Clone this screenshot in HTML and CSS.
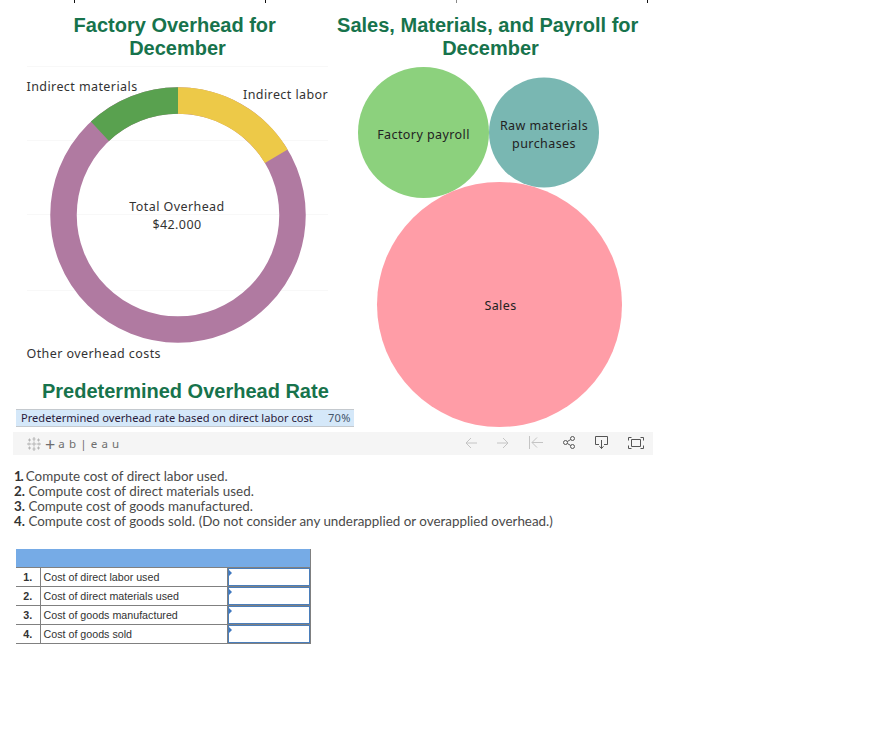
FILE: index.html
```html
<!DOCTYPE html>
<html>
<head>
  <meta charset="utf-8">
  <title>Factory Overhead for December</title>
  <link rel="stylesheet" href="styles.css">
</head>
<body>
  <div class="ticks">
    <span class="tick"></span>
    <span class="tick"></span>
    <span class="tick tick-grey"></span>
    <span class="tick"></span>
  </div>

  <div class="titles">
    <h1 class="viz-title">Factory Overhead for&nbsp;<br>December</h1>
    <h1 class="viz-title viz-title-wide">Sales, Materials, and Payroll for&nbsp;<br>December</h1>
  </div>

  <div class="charts">
    <div class="left-col">
      <svg class="donut" width="301" height="306" viewBox="0 0 301 306">
        <g class="grid">
          <line x1="0" x2="301" y1="5.5" y2="5.5"/>
          <line x1="0" x2="301" y1="79.5" y2="79.5"/>
          <line x1="0" x2="301" y1="153.5" y2="153.5"/>
          <line x1="0" x2="301" y1="229.5" y2="229.5"/>
        </g>
        <circle cx="151" cy="154" r="114.5" fill="none" stroke="#b07aa1" stroke-width="26.5"/>
        <path d="M151 39.5A114.5 114.5 0 0 1 249.3 95.3" fill="none" stroke="#edc948" stroke-width="26.5"/>
        <path d="M151 39.5A114.5 114.5 0 0 0 72.9 70.3" fill="none" stroke="#59a14f" stroke-width="26.5"/>
        <text class="chart-label" x="-0.5" y="30">Indirect materials</text>
        <text class="chart-label" x="216" y="38">Indirect labor</text>
        <text class="chart-label" x="-0.5" y="297">Other overhead costs</text>
        <text class="chart-label" x="150" y="150" text-anchor="middle">Total Overhead</text>
        <text class="chart-label" x="150" y="168" text-anchor="middle">$42.000</text>
      </svg>
      <h2 class="rate-title">Predetermined Overhead Rate</h2>
      <div class="rate-row">
        <span class="rate-name">Predetermined overhead rate based on direct labor cost</span>
        <span class="rate-value">70%</span>
      </div>
    </div>
    <svg class="bubbles" width="300" height="370" viewBox="0 0 300 370">
      <circle cx="69.5" cy="71.5" r="65.5" fill="#8cd17d"/>
      <circle cx="190" cy="71.5" r="55" fill="#79b7b2"/>
      <circle cx="145.5" cy="243.5" r="122.5" fill="#ff9da7"/>
      <text class="chart-label dark" x="69.5" y="78" text-anchor="middle">Factory payroll</text>
      <text class="chart-label dark" x="190" y="69" text-anchor="middle">Raw materials</text>
      <text class="chart-label dark" x="190" y="87" text-anchor="middle">purchases</text>
      <text class="chart-label dark" x="146.5" y="249" text-anchor="middle">Sales</text>
    </svg>
  </div>

  <div class="toolbar">
    <div class="brand">
      <svg width="16" height="16" viewBox="0 0 16 16" class="brand-mark">
        <path d="M8 5.5v5M5.5 8h5M8 1v4M6.5 3h3M8 11v4M6.5 13h3M1 8h4M3 6.5v3M11 8h4M13 6.5v3M3.5 2.5v3M2 4h3M12.5 2.5v3M11 4h3M3.5 10.5v3M2 12h3M12.5 10.5v3M11 12h3"/>
      </svg>
      <span class="brand-plus">+</span>
      <span class="brand-name">a b | e a u</span>
    </div>
    <div class="tools">
      <svg class="tool tool-off" width="12" height="12" viewBox="0 0 12 12"><path d="M12 6H1M6 1L1 6l5 5"/></svg>
      <svg class="tool tool-off" width="12" height="12" viewBox="0 0 12 12"><path d="M0 6h11M6 1l5 5-5 5"/></svg>
      <svg class="tool tool-off" width="14" height="13" viewBox="0 0 14 13"><path d="M.5 0v13M14 6.500H3M8 1.500L3 6.500l5 5"/></svg>
      <svg class="tool" width="12" height="13" viewBox="0 0 12 13"><circle cx="2.500" cy="6.500" r="2"/><circle cx="9.500" cy="2.500" r="2"/><circle cx="9.500" cy="10.500" r="2"/><path d="M4.300 5.500l3.500-2M4.300 7.500l3.500 2"/></svg>
      <svg class="tool" width="13" height="13" viewBox="0 0 13 13"><path d="M4 8.500H.5V.5h12v8H9M6.500 4v8.500M4.500 10.300l2 2.200 2-2.200"/></svg>
      <svg class="tool" width="16" height="12" viewBox="0 0 16 12"><path d="M.5 3.500v-3h3M12.500 .5h3v3M.5 8.500v3h3M12.500 11.500h3v-3M3.500 2.500h9v7h-9z"/></svg>
    </div>
  </div>

  <ol class="questions">
    <li class="first"><b>1.</b> Compute cost of direct labor used.</li>
    <li><b>2.</b> Compute cost of direct materials used.</li>
    <li><b>3.</b> Compute cost of goods manufactured.</li>
    <li><b>4.</b> Compute cost of goods sold. (Do not consider any underapplied or overapplied overhead.)</li>
  </ol>

  <table class="answers">
    <colgroup>
      <col class="col-num">
      <col class="col-name">
      <col class="col-entry">
    </colgroup>
    <tr class="answers-head"><td colspan="3"></td></tr>
    <tr><td class="num">1.</td><td class="name">Cost of direct labor used</td><td class="entry"><div class="field"></div></td></tr>
    <tr><td class="num">2.</td><td class="name">Cost of direct materials used</td><td class="entry"><div class="field"></div></td></tr>
    <tr><td class="num">3.</td><td class="name">Cost of goods manufactured</td><td class="entry"><div class="field"></div></td></tr>
    <tr><td class="num">4.</td><td class="name">Cost of goods sold</td><td class="entry"><div class="field"></div></td></tr>
  </table>
</body>
</html>
```
FILE: styles.css
```css
body {
  margin: 0;
  background: #fff;
  font-family: "Liberation Sans", Arial, sans-serif;
  width: 888px;
  height: 734px;
  overflow: hidden;
}

.ticks {
  display: flex;
  height: 3px;
  padding-left: 74px;
  gap: 190px;
}

.tick {
  width: 1px;
  background: #111;
}

.tick-grey {
  background: #888;
}

.titles {
  display: flex;
  gap: 7px;
  height: 47px;
  padding-left: 27px;
  margin-top: 11px;
}

.viz-title {
  width: 301px;
  margin: 0;
  color: #17734c;
  font-size: 20px;
  line-height: 22.5px;
  font-weight: 700;
  text-align: center;
}

.viz-title-wide {
  width: 311px;
}

.charts {
  display: flex;
  height: 371px;
  padding-left: 16px;
}

.left-col {
  width: 338px;
}

.donut {
  display: block;
  margin: 0 0 0 11px;
  overflow: visible;
}

.grid line {
  stroke: #f8f8f8;
  stroke-width: 1;
}

.chart-label {
  font-family: "Noto Sans", "Open Sans", sans-serif;
  font-size: 12.5px;
  letter-spacing: 0.42px;
  fill: #333;
}

.chart-label.dark {
  fill: #222;
}

.bubbles {
  display: block;
  flex: none;
}

.rate-title {
  margin: 12px 0 0 26px;
  color: #17734c;
  font-size: 20px;
  line-height: 24px;
  font-weight: 700;
  white-space: nowrap;
}

.rate-row {
  display: flex;
  justify-content: space-between;
  margin-top: 6px;
  height: 16px;
  padding: 0 3px 0 5px;
  background: #d5e8f9;
  border-top: 1px solid #c4c9ce;
  border-bottom: 1px solid #c4c9ce;
  font-family: "Noto Sans", "Open Sans", sans-serif;
  font-size: 11.1px;
  line-height: 16px;
}

.rate-name {
  color: #2a1a3a;
}

.rate-value {
  color: #44556a;
  letter-spacing: 0.4px;
}

.toolbar {
  display: flex;
  justify-content: space-between;
  align-items: center;
  width: 640px;
  height: 23px;
  margin: 0 0 0 13px;
  background: #f5f5f5;
}

.brand {
  display: flex;
  align-items: center;
  padding-left: 13px;
  color: #6e6e6e;
  font-family: "Noto Sans", sans-serif;
}

.brand-mark path {
  fill: none;
  stroke: #b5b5b5;
  stroke-width: 1;
}

.brand-plus {
  margin-left: 3px;
  font-size: 18px;
  line-height: 18px;
}

.brand-name {
  margin-left: 3px;
  font-size: 11.5px;
  letter-spacing: 0.6px;
}

.tools {
  display: flex;
  align-items: center;
  gap: 20px;
  padding-right: 9px;
  margin-bottom: 2px;
}

.tool {
  fill: none;
  stroke: #555;
  stroke-width: 1;
}

.tool-off {
  stroke: #c4c4c4;
}

.questions {
  list-style: none;
  margin: 14px 0 0 14px;
  padding: 0;
  color: #4a4a4a;
  font-family: Lato, "Open Sans", sans-serif;
  font-size: 13.4px;
  line-height: 15px;
}

.questions b {
  color: #333;
}

.first b {
  letter-spacing: -1.3px;
}

.answers {
  border-collapse: collapse;
  table-layout: fixed;
  width: 295px;
  margin: 20px 0 0 16px;
  font-size: 10.7px;
  color: #333;
}

.col-num {
  width: 24px;
}

.col-name {
  width: 187px;
}

.answers td {
  padding: 0;
  height: 18px;
  border-bottom: 1px solid #808080;
}

.answers-head td {
  background: #76abe6;
  border-right: 1px solid #808080;
}

.num {
  border-right: 1px solid #808080;
  text-align: center;
  font-weight: 700;
}

.answers .name {
  padding-left: 3px;
  white-space: nowrap;
}

.answers .entry {
  border-left: 1px solid #808080;
  border-right: 1px solid #808080;
}

.field {
  position: relative;
  box-sizing: border-box;
  height: 18px;
  border: 1px solid #4a7ebb;
}

.field::before {
  content: "";
  position: absolute;
  left: 0;
  top: 1px;
  border-left: 3px solid #3f78c0;
  border-top: 3px solid transparent;
  border-bottom: 3px solid transparent;
}
```
